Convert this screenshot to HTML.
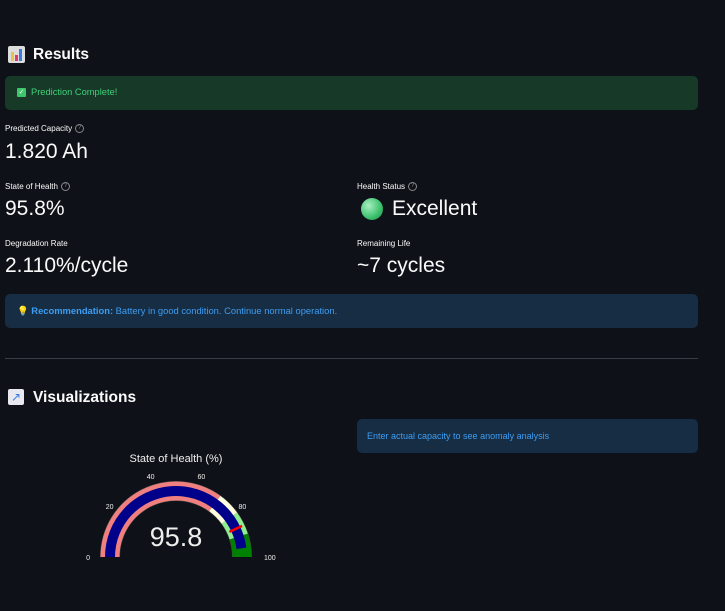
<!DOCTYPE html>
<html><head><meta charset="utf-8"><style>
body{margin:0;background:#0e1117;width:725px;height:611px;overflow:hidden;font-family:"Liberation Sans",sans-serif;color:#fafafa;position:relative}
.a{position:absolute;white-space:nowrap}
h2{margin:0;font-size:15.5px;font-weight:bold}
.lbl{font-size:8px;color:#fafafa}
.q{display:inline-block;width:7px;height:7px;border:1px solid #888;border-radius:50%;font-size:6px;line-height:7px;text-align:center;color:#888;vertical-align:middle;margin-left:3px}
.val{font-size:21px}
</style></head><body>
<div class="a" style="left:8px;top:46px;width:17px;height:17px;background:#ddd;border-radius:2px"><div style="position:absolute;left:3px;top:6px;width:3px;height:9px;background:#e9c24a"></div><div style="position:absolute;left:7px;top:9px;width:3px;height:6px;background:#e03a6d"></div><div style="position:absolute;left:11px;top:3px;width:3px;height:12px;background:#3a7be0"></div></div>
<h2 class="a" style="left:33px;top:46px">Results</h2>
<div class="a" style="left:5px;top:76px;width:693px;height:34px;background:#173928;border-radius:5px"></div>
<div class="a" style="left:17px;top:88px;width:9px;height:9px;background:#3ec66b;border-radius:1px;color:#fff;font-size:7px;line-height:9px;text-align:center">✓</div>
<div class="a" style="left:31px;top:87px;font-size:9.3px;color:#3fd17a">Prediction Complete!</div>
<div class="a lbl" style="left:5px;top:124px">Predicted Capacity<span class="q">?</span></div>
<div class="a val" style="left:5px;top:140px">1.820 Ah</div>
<div class="a lbl" style="left:5px;top:182px">State of Health<span class="q">?</span></div>
<div class="a val" style="left:5px;top:197px">95.8%</div>
<div class="a lbl" style="left:357px;top:182px">Health Status<span class="q">?</span></div>
<div class="a" style="left:361px;top:198px;width:22px;height:22px;border-radius:50%;background:radial-gradient(circle at 35% 35%,#a8f0c0,#3cc06c 60%,#1f8a48)"></div>
<div class="a val" style="left:392px;top:197px">Excellent</div>
<div class="a lbl" style="left:5px;top:239px">Degradation Rate</div>
<div class="a val" style="left:5px;top:254px">2.110%/cycle</div>
<div class="a lbl" style="left:357px;top:239px">Remaining Life</div>
<div class="a val" style="left:357px;top:254px">~7 cycles</div>
<div class="a" style="left:5px;top:294px;width:693px;height:34px;background:#172d43;border-radius:5px"></div>
<div class="a" style="left:17px;top:305px;font-size:9.4px;color:#3d9df3"><span style="color:#f5c542">💡</span> <b>Recommendation:</b> Battery in good condition. Continue normal operation.</div>
<div class="a" style="left:5px;top:358px;width:693px;height:1px;background:#3a3d45"></div>
<div class="a" style="left:8px;top:389px;width:16px;height:16px;background:#e8e8f0;border-radius:2px;color:#3a7be0;font-size:12px;line-height:16px;text-align:center">↗</div>
<h2 class="a" style="left:33px;top:389px">Visualizations</h2>
<div class="a" style="left:357px;top:419px;width:341px;height:34px;background:#172d43;border-radius:5px"></div>
<div class="a" style="left:367px;top:431px;font-size:9px;color:#3d9df3">Enter actual capacity to see anomaly analysis</div>
<svg class="a" style="left:0;top:440px" width="360" height="140"><g id="arcs"></g><g id="tx">
<text x="176" y="22" fill="#eee" font-size="11" text-anchor="middle" font-family="Liberation Sans">State of Health (%)</text>
<text x="176" y="106" fill="#eee" font-size="27" text-anchor="middle" font-family="Liberation Sans">95.8</text></g>
</svg>
<script>
var s=document.getElementById('arcs'),tx=document.getElementById('tx'),cx=176,cy=117,ns='http://www.w3.org/2000/svg';
function pt(v,r){var a=Math.PI*v/100;return [cx-r*Math.cos(a),cy-r*Math.sin(a)];}
function arc(v1,v2,r1,r2,c){var a=pt(v1,r2),b=pt(v2,r2),d=pt(v2,r1),e=pt(v1,r1);
var p=document.createElementNS(ns,'path');p.setAttribute('d','M'+a.join(' ')+' A'+r2+' '+r2+' 0 0 1 '+b.join(' ')+' L'+d.join(' ')+' A'+r1+' '+r1+' 0 0 0 '+e.join(' ')+'Z');p.setAttribute('fill',c);s.appendChild(p);}
arc(0,100,56,76,'#444444');
arc(0,70,56.5,75.5,'#f08080');arc(70,80,56.5,75.5,'#ffffe0');arc(80,90,56.5,75.5,'#90ee90');arc(90,100,56.5,75.5,'#008000');
arc(0,95.8,61,71,'#00008b');
var a=pt(86,59),b=pt(86,73),l=document.createElementNS(ns,'line');l.setAttribute('x1',a[0]);l.setAttribute('y1',a[1]);l.setAttribute('x2',b[0]);l.setAttribute('y2',b[1]);l.setAttribute('stroke','red');l.setAttribute('stroke-width','2.5');s.appendChild(l);
[0,20,40,60,80,100].forEach(function(v){var p=pt(v,82),t=document.createElementNS(ns,'text');var dx=v==0?-4:(v==100?6:0);t.setAttribute('x',p[0]+dx);t.setAttribute('y',p[1]+(v==0||v==100?3:0));t.setAttribute('fill','#eee');t.setAttribute('font-size','7');t.setAttribute('text-anchor',v==0?'end':(v==100?'start':'middle'));t.setAttribute('font-family','Liberation Sans');t.textContent=v;tx.appendChild(t);});
</script>
</body></html>
